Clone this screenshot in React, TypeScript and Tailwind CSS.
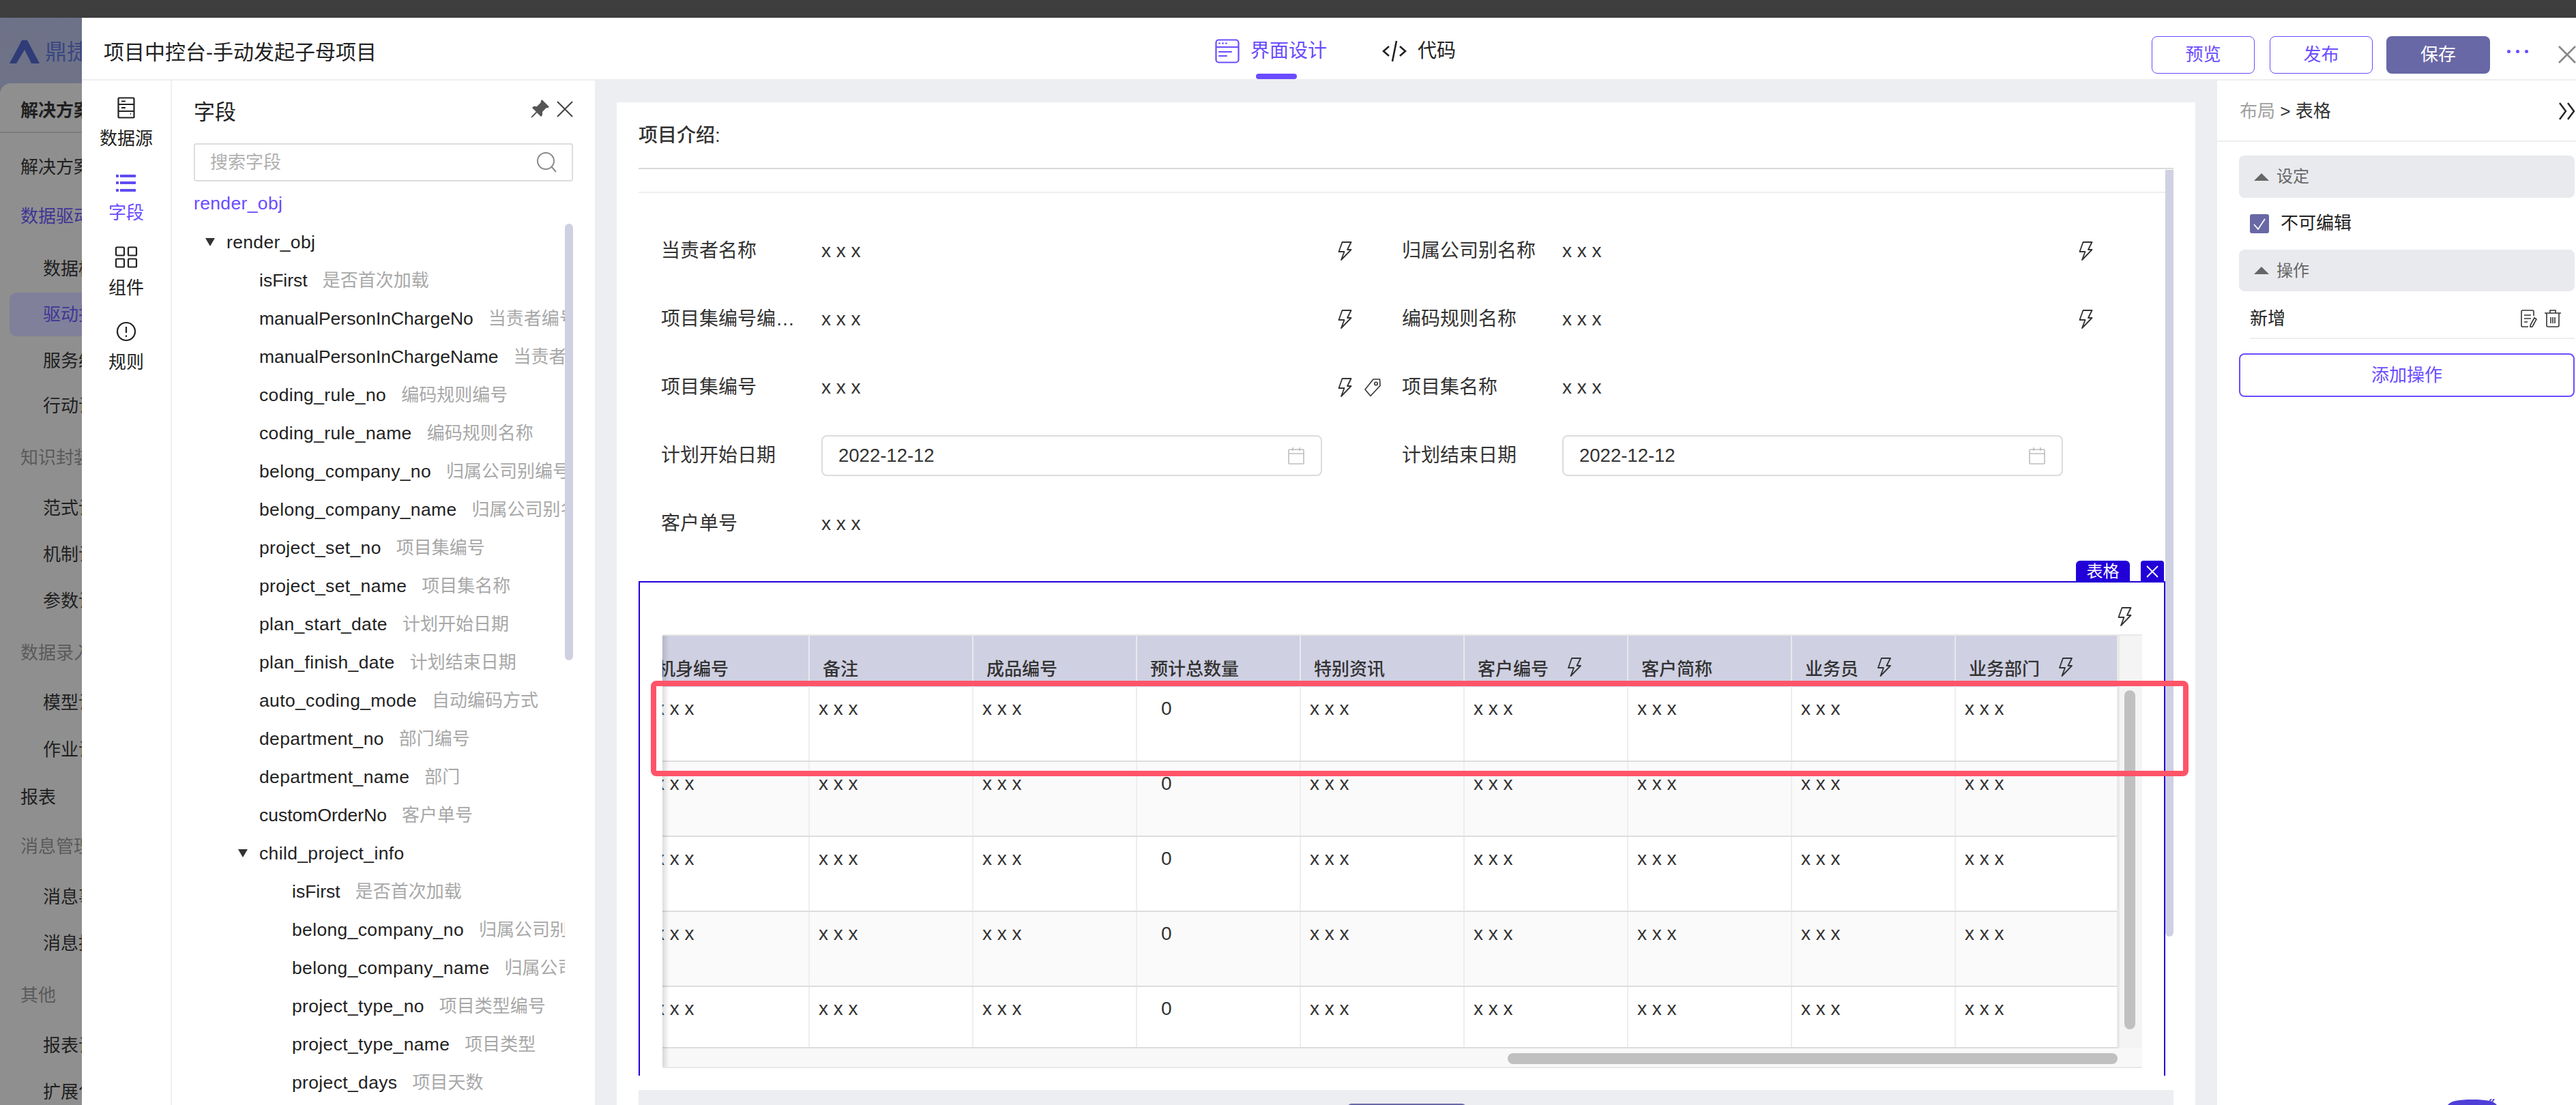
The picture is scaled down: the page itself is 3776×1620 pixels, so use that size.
import { BsPinAngleFill } from "react-icons/bs";

const Bolt = ({ className = "w-[21px] h-[28px]" }: { className?: string }) => (
  <svg viewBox="0 0 20 28" fill="none" stroke="#333" strokeWidth="1.8" strokeLinejoin="round" className={className}>
    <path d="M6 1h13l-5.500 11H19L4.500 27 9 15H1z" />
  </svg>
);

const TagIcon = () => (
  <svg viewBox="0 0 26 28" fill="none" stroke="#333" strokeWidth="1.6" strokeLinejoin="round" className="w-[26px] h-[28px]">
    <path d="M14 2h9.500l.5 9.500L10 26.500 2 17z" />
    <circle cx="18" cy="8.500" r="2.200" />
  </svg>
);

const CalendarIcon = () => (
  <svg viewBox="0 0 26 26" fill="none" stroke="#bdbdbd" strokeWidth="1.6" className="w-[26px] h-[26px]">
    <rect x="2" y="4" width="22" height="21" rx="1" />
    <path d="M2 10h22M8 1v5M18 1v5" />
  </svg>
);

const XXX = () => <span className="text-[28px]">x x x</span>;

const sideItems = [
  { t: "解决方案列表", c: "mt-[16px] pl-[30px] text-[#1f1f1f]" },
  { t: "数据驱动设计", c: "mt-[4px] pl-[30px] text-[#3f3696]" },
  { t: "数据模型", c: "mt-[9px] pl-[63px] text-[#1f1f1f]" },
  { t: "驱动执行", c: "mt-[1px] ml-[14px] pl-[49px] text-[#3f3696] bg-[#80809a] rounded-l-[10px] !h-[64px]" },
  { t: "服务编排", c: "mt-[3px] pl-[63px] text-[#1f1f1f] !h-[65px]" },
  { t: "行动设计", c: "pl-[63px] text-[#1f1f1f]" },
  { t: "知识封装", c: "mt-[8px] pl-[30px] text-[#5a5a5a]" },
  { t: "范式设计", c: "mt-[6px] pl-[63px] text-[#1f1f1f]" },
  { t: "机制设计", c: "pl-[63px] text-[#1f1f1f]" },
  { t: "参数设计", c: "pl-[63px] text-[#1f1f1f]" },
  { t: "数据录入", c: "mt-[8px] pl-[30px] text-[#5a5a5a]" },
  { t: "模型设计", c: "mt-[5px] pl-[63px] text-[#1f1f1f]" },
  { t: "作业设计", c: "mt-[1px] pl-[63px] text-[#1f1f1f]" },
  { t: "报表", c: "mt-[2px] pl-[30px] text-[#1f1f1f]" },
  { t: "消息管理", c: "mt-[4px] pl-[30px] text-[#5a5a5a]" },
  { t: "消息事件", c: "mt-[6px] pl-[63px] text-[#1f1f1f]" },
  { t: "消息推送", c: "pl-[63px] text-[#1f1f1f]" },
  { t: "其他", c: "mt-[8px] pl-[30px] text-[#5a5a5a]" },
  { t: "报表设计", c: "mt-[6px] pl-[63px] text-[#1f1f1f]" },
  { t: "扩展包", c: "pl-[63px] text-[#1f1f1f]" },
];

const fields = [
  ["isFirst", "是否首次加载"],
  ["manualPersonInChargeNo", "当责者编号"],
  ["manualPersonInChargeName", "当责者名称"],
  ["coding_rule_no", "编码规则编号"],
  ["coding_rule_name", "编码规则名称"],
  ["belong_company_no", "归属公司别编号"],
  ["belong_company_name", "归属公司别名称"],
  ["project_set_no", "项目集编号"],
  ["project_set_name", "项目集名称"],
  ["plan_start_date", "计划开始日期"],
  ["plan_finish_date", "计划结束日期"],
  ["auto_coding_mode", "自动编码方式"],
  ["department_no", "部门编号"],
  ["department_name", "部门"],
  ["customOrderNo", "客户单号"],
];

const childFields = [
  ["isFirst", "是否首次加载"],
  ["belong_company_no", "归属公司别编号"],
  ["belong_company_name", "归属公司别名称"],
  ["project_type_no", "项目类型编号"],
  ["project_type_name", "项目类型"],
  ["project_days", "项目天数"],
];

const columns = [
  { name: "备注" },
  { name: "成品编号" },
  { name: "预计总数量", zero: true },
  { name: "特别资讯" },
  { name: "客户编号", bolt: true },
  { name: "客户简称" },
  { name: "业务员", bolt: true },
  { name: "业务部门", bolt: true },
];

const rows = [
  "h-[110px] bg-white",
  "h-[110px] bg-[#fafafa]",
  "h-[110px] bg-white",
  "h-[110px] bg-[#fafafa]",
  "h-[90px] bg-white",
];

const FieldRow = ({ name, desc, indent }: { name: string; desc: string; indent: string }) => (
  <div className={`h-[56px] flex items-center whitespace-nowrap overflow-hidden ${indent}`}>
    <span className={`text-[#222] text-[26.5px] ${name.includes("_") ? "tracking-[0.35px]" : ""}`}>{name}</span>
    <span className="ml-[22px] text-[#a8a8a8]">{desc}</span>
  </div>
);

const FormCell = ({ label, value, icons }: { label: string; value: React.ReactNode; icons?: React.ReactNode }) => (
  <div className="h-[100px] flex items-center text-[28px]">
    <div className="w-[235px] pr-[35px] truncate leading-[36px]">{label}</div>
    <div className="w-[734px] flex items-center">{value}</div>
    <div className="w-[117px] pl-[23px] flex items-center gap-[17px]">{icons}</div>
  </div>
);

const DateInput = () => (
  <div className="w-full h-[60px] border-2 border-[#dcdcdc] rounded-[8px] pl-[23px] pr-[23px] flex items-center justify-between">
    <span className="text-[27.5px]">2022-12-12</span>
    <CalendarIcon />
  </div>
);

const App = () => {
  return (
    <div className="relative w-[3776px] h-[1620px] overflow-hidden flex flex-col bg-white text-[26px] leading-none text-[#333] font-['Liberation_Sans','Noto_Sans_CJK_SC',sans-serif]">
      <div className="h-[26px] shrink-0 bg-[#3e3e3e]" />
      <div className="flex-1 min-h-0 flex">
        {/* blurred page behind the drawer */}
        <div className="w-[120px] shrink-0 overflow-hidden flex flex-col bg-linear-to-b from-[#6e7288] to-[#808290]">
          <div className="h-[96px] shrink-0 flex items-center pl-[14px] pt-[4px] gap-[8px]">
            <svg viewBox="0 0 44 34" className="w-[44px] h-[34px] shrink-0">
              <path d="M0 34 18 0h8l18 34H32L22 14 10 34z" fill="#2f3c78" />
            </svg>
            <span className="text-[32px] text-[#3a4780] whitespace-nowrap">鼎捷</span>
          </div>
          <div className="flex-1 rounded-tl-[16px] bg-[#8f8f8f] overflow-hidden whitespace-nowrap">
            <div className="h-[73px] border-b-2 border-[#7c7c7c] pl-[30px] pt-[8px] flex items-center font-semibold text-[#1f1f1f]">解决方案</div>
            {sideItems.map((item, k) => (
              <div key={k} className={`h-[68px] flex items-center ${item.c}`}>
                {item.t}
              </div>
            ))}
          </div>
        </div>

        {/* drawer */}
        <div className="flex-1 min-w-0 flex flex-col bg-white border-t border-[#f4f4f4]">
          <div className="h-[91px] shrink-0 grid grid-cols-[1661px_auto_1fr] items-center border-b-2 border-[#eeeeee]">
            <div className="pl-[32px] pt-[10px] text-[30px] text-[#222]">项目中控台-手动发起子母项目</div>
            <div className="h-full flex items-center text-[28px] text-[#6a4cff] relative pt-[6px]">
              <svg viewBox="0 0 36 36" fill="none" stroke="#6a4cff" strokeWidth="2.2" strokeLinecap="round" className="w-[36px] h-[36px]">
                <rect x="1.500" y="1.500" width="33" height="33" rx="4" />
                <path d="M2 12h32M6 6.500h1M11 6.500h1M16 6.500h1M6 19h18M6 25h11" />
              </svg>
              <span className="ml-[16px]">界面设计</span>
              <div className="absolute bottom-0 left-[60px] w-[60px] h-[8px] rounded-full bg-[#6a4cff]" />
              <svg viewBox="0 0 36 32" fill="none" stroke="#222" strokeWidth="2.600" className="ml-[81px] w-[36px] h-[32px]">
                <path d="M10 9 2 16l8 7M26 9l8 7-8 7M21 1l-6 30" />
              </svg>
              <span className="ml-[16px] text-[#222]">代码</span>
            </div>
            <div className="flex items-center justify-end pt-[17px]">
              <div className="w-[151px] h-[55px] border-[1.5px] border-[#6a4cff] rounded-[8px] flex items-center justify-center text-[#6a4cff]">预览</div>
              <div className="ml-[22px] w-[151px] h-[55px] border-[1.5px] border-[#6a4cff] rounded-[8px] flex items-center justify-center text-[#6a4cff]">发布</div>
              <div className="ml-[20px] w-[152px] h-[55px] rounded-[8px] bg-[#6968a6] flex items-center justify-center text-white">保存</div>
              <div className="ml-[25px] w-[31px] -mt-[9px] flex justify-between">
                <span className="w-[5px] h-[5px] rounded-full bg-[#6a4cff]" />
                <span className="w-[5px] h-[5px] rounded-full bg-[#6a4cff]" />
                <span className="w-[5px] h-[5px] rounded-full bg-[#6a4cff]" />
              </div>
              <svg viewBox="0 0 26 26" stroke="#888" strokeWidth="2.6" className="ml-[44px] w-[26px] h-[26px]">
                <path d="M1 1l24 24M25 1 1 25" />
              </svg>
            </div>
          </div>

          <div className="flex-1 min-h-0 flex">
            {/* icon rail */}
            <div className="w-[132px] shrink-0 border-r-2 border-[#f0f0f0] flex flex-col items-center pt-[24px]">
              <div className="h-[110px] flex flex-col items-center">
                <svg viewBox="0 0 26 32" fill="none" stroke="#222" strokeWidth="2.2" className="w-[26px] h-[32px]">
                  <rect x="1.500" y="1.500" width="23" height="29" rx="1.500" />
                  <path d="M1.500 11h23M1.500 21h23M6 6.500h6M6 16h6M19 25h1" />
                </svg>
                <span className="mt-[16px] text-[#222]">数据源</span>
              </div>
              <div className="h-[109px] flex flex-col items-center text-[#6a4cff]">
                <svg viewBox="0 0 30 26" fill="#5f4cf0" className="w-[30px] h-[26px] mt-[4px]">
                  <rect x="0" y="0" width="4" height="4" />
                  <rect x="6" y="0" width="23" height="4" />
                  <rect x="0" y="10" width="4" height="4" />
                  <rect x="6" y="10" width="23" height="4" />
                  <rect x="0" y="21" width="4" height="4" />
                  <rect x="6" y="21" width="23" height="4" />
                </svg>
                <span className="mt-[17px]">字段</span>
              </div>
              <div className="h-[110px] flex flex-col items-center">
                <svg viewBox="0 0 34 32" fill="none" stroke="#222" strokeWidth="2.2" className="w-[34px] h-[32px]">
                  <rect x="2" y="1.500" width="12" height="12" rx="1.500" />
                  <rect x="20" y="1.500" width="12" height="12" rx="1.500" />
                  <rect x="2" y="18.500" width="12" height="12" rx="1.500" />
                  <rect x="20" y="18.500" width="12" height="12" rx="1.500" />
                </svg>
                <span className="mt-[16px] text-[#222]">组件</span>
              </div>
              <div className="flex flex-col items-center">
                <svg viewBox="0 0 30 30" fill="none" stroke="#222" strokeWidth="2.2" className="w-[30px] h-[30px]">
                  <circle cx="15" cy="15" r="13" />
                  <path d="M15 8v9M15 20.500v2.500" />
                </svg>
                <span className="mt-[17px] text-[#222]">规则</span>
              </div>
            </div>

            {/* field tree */}
            <div className="w-[620px] shrink-0 relative pl-[32px] pr-[32px] overflow-hidden">
              <div className="h-[92px] flex items-center justify-between">
                <span className="text-[31px] text-[#222]">字段</span>
                <div className="flex items-center gap-[10px] -mt-[8px]">
                  <BsPinAngleFill className="w-[30px] h-[30px] text-[#555]" />
                  <svg viewBox="0 0 24 24" stroke="#444" strokeWidth="2" className="w-[24px] h-[24px]">
                    <path d="M1 1l22 22M23 1 1 23" />
                  </svg>
                </div>
              </div>
              <div className="h-[56px] border-2 border-[#dddddd] rounded-[4px] pl-[22px] pr-[22px] flex items-center justify-between text-[#b0b0b0]">
                <span>搜索字段</span>
                <svg viewBox="0 0 30 32" fill="none" stroke="#8a8a8a" strokeWidth="2" className="w-[30px] h-[32px]">
                  <circle cx="14" cy="14" r="12" />
                  <path d="m23 23 6 7" />
                </svg>
              </div>
              <div className="h-[64px] flex items-center text-[26.5px] tracking-[0.35px] text-[#6a4cff]">render_obj</div>
              <div className="w-[544px] -mt-[3px]">
                <div className="h-[56px] flex items-center">
                  <span className="ml-[17px] w-0 h-0 border-x-[7px] border-x-transparent border-t-[12px] border-t-[#333]" />
                  <span className="ml-[17px] text-[#222] text-[26.5px] tracking-[0.35px]">render_obj</span>
                </div>
                {fields.map(([name, desc], k) => (
                  <FieldRow key={k} name={name} desc={desc} indent="pl-[96px]" />
                ))}
                <div className="h-[56px] flex items-center">
                  <span className="ml-[65px] w-0 h-0 border-x-[7px] border-x-transparent border-t-[12px] border-t-[#333]" />
                  <span className="ml-[17px] text-[#222] text-[26.5px] tracking-[0.35px]">child_project_info</span>
                </div>
                {childFields.map(([name, desc], k) => (
                  <FieldRow key={k} name={name} desc={desc} indent="pl-[144px]" />
                ))}
              </div>
              <div className="absolute left-[576px] top-[210px] w-[12px] h-[640px] rounded-full bg-[#cfd0e2]" />
            </div>

            {/* canvas */}
            <div className="flex-1 min-w-0 bg-[#edeef2] pt-[32px] px-[32px]">
              <div className="relative h-full bg-white px-[32px] flex flex-col">
                <div className="h-[98px] shrink-0 pt-[2px] border-b-2 border-[#d9d9d9] flex items-center text-[28px] font-medium text-[#333]">项目介绍:</div>
                <div className="h-[35px] shrink-0 border-b-2 border-[#eeeeee]" />
                <div className="shrink-0 pl-[33px] pt-[35px]">
                  <div className="grid grid-cols-[1086px_1fr]">
                    <FormCell label="当责者名称" value={<XXX />} icons={<Bolt />} />
                    <FormCell label="归属公司别名称" value={<XXX />} icons={<Bolt />} />
                    <FormCell label="项目集编号编码规则编号" value={<XXX />} icons={<Bolt />} />
                    <FormCell label="编码规则名称" value={<XXX />} icons={<Bolt />} />
                    <FormCell label="项目集编号" value={<XXX />} icons={<><Bolt /><TagIcon /></>} />
                    <FormCell label="项目集名称" value={<XXX />} />
                    <FormCell label="计划开始日期" value={<DateInput />} />
                    <FormCell label="计划结束日期" value={<DateInput />} />
                    <FormCell label="客户单号" value={<XXX />} />
                  </div>
                </div>

                {/* selected table */}
                <div className="relative mt-[34px] h-[725px] shrink-0 border-x-2 border-t-2 border-[#2200d8] mr-[12px] pl-[33px] pr-[32px]">
                  <div className="absolute -top-[32px] right-[50px] w-[79px] h-[32px] rounded-t-[6px] bg-[#2200d8] text-white text-[24px] flex items-center justify-center">表格</div>
                  <div className="absolute -top-[32px] right-[0px] w-[34px] h-[32px] rounded-t-[4px] bg-[#2200d8] text-white flex items-center justify-center">
                    <svg viewBox="0 0 18 18" stroke="white" strokeWidth="1.8" className="w-[18px] h-[18px]">
                      <path d="M1 1l16 16M17 1 1 17" />
                    </svg>
                  </div>
                  <div className="h-[76px] flex items-start justify-end pt-[36px] pr-[15px]">
                    <Bolt className="w-[21px] h-[28px]" />
                  </div>
                  <div className="relative h-[636px] overflow-hidden border-t-2 border-[#e8e8e8] bg-[#f8f8f8]">
                    <div className="flex">
                      <div className="w-[2136px] overflow-hidden shrink-0 border-r-4 border-[#e8e8e8]">
                        <div className="flex h-[75px] bg-[#cfd0e2] -ml-[24px] font-medium text-[#333] whitespace-nowrap">
                          <div className="w-[240px] shrink-0 pl-[17px] pt-[36px] border-r-2 border-[#e8e8ee]">机身编号</div>
                          {columns.map((col, k) => (
                            <div key={k} className="w-[240px] shrink-0 pl-[19px] pt-[36px] border-r-2 border-[#e8e8ee] flex items-start">
                              <span>{col.name}</span>
                              {col.bolt && <Bolt className="ml-[28px] -mt-[4px] w-[20px] h-[28px]" />}
                            </div>
                          ))}
                        </div>
                        {rows.map((row, r) => (
                          <div key={r} className={`flex -ml-[24px] border-b-2 border-[#dddddd] ${row}`}>
                            <div className="w-[240px] shrink-0 pl-[13px] pt-[18px] border-r-2 border-[#eeeeee]"><XXX /></div>
                            {columns.map((col, k) => (
                              <div key={k} className={`w-[240px] shrink-0 pt-[18px] border-r-2 border-[#eeeeee] ${col.zero ? "pl-[35px]" : "pl-[13px]"}`}>
                                {col.zero ? <span className="text-[28px]">0</span> : <XXX />}
                              </div>
                            ))}
                          </div>
                        ))}
                      </div>
                      <div className="flex-1 bg-[#f4f4f4] relative">
                        <div className="absolute left-[7px] top-[80px] w-[16px] h-[497px] rounded-full bg-[#c0c0c0]" />
                      </div>
                    </div>
                    {/* left fixed column shadow */}
                    <div className="absolute left-0 top-0 bottom-0 w-[10px] bg-linear-to-r from-[#00000022] to-transparent" />
                    <div className="absolute left-[1239px] right-[36px] top-[612px] h-[16px] rounded-full bg-[#c0c0c0]" />
                    <div className="absolute left-0 right-0 bottom-0 h-[2px] bg-[#e8e8e8]" />
                  </div>
                </div>

                <div className="mt-[21px] flex-1 bg-[#edeef2] relative">
                  <div className="absolute left-[1039px] top-[20px] w-[174px] h-[10px] rounded-t-[6px] bg-[#6968a6]" />
                </div>

                {/* canvas scrollbar */}
                <div className="absolute right-[32px] top-[99px] w-[12px] h-[1124px] rounded-b-full bg-[#cfd0e2]" />
              </div>
            </div>

            {/* property panel */}
            <div className="w-[526px] shrink-0 flex flex-col bg-white">
              <div className="h-[90px] shrink-0 border-b-2 border-[#eeeeee] pl-[33px] pt-[2px] flex items-center justify-between">
                <span>
                  <span className="text-[#a0a0a0]">布局</span>
                  <span className="text-[#333]"> &gt; 表格</span>
                </span>
                <svg viewBox="0 0 26 28" fill="none" stroke="#222" strokeWidth="2.4" className="w-[26px] h-[28px]">
                  <path d="M2 2l9 12-9 12M14 2l9 12-9 12" />
                </svg>
              </div>
              <div className="pl-[32px] pr-[2px] pt-[20px]">
                <div className="h-[62px] rounded-[8px] bg-[#e9eaee] flex items-center pl-[22px] text-[24px] text-[#666]">
                  <span className="w-0 h-0 border-x-[11px] border-x-transparent border-b-[11px] border-b-[#666]" />
                  <span className="ml-[11px]">设定</span>
                </div>
                <div className="h-[76px] flex items-center pl-[16px]">
                  <span className="w-[28px] h-[28px] rounded-[3px] bg-[#6968a6] flex items-center justify-center">
                    <svg viewBox="0 0 20 20" fill="none" stroke="white" strokeWidth="1.8" className="w-[20px] h-[20px]">
                      <path d="m2 11 6 7L18 3" />
                    </svg>
                  </span>
                  <span className="ml-[17px] -mt-[2px] text-[#222]">不可编辑</span>
                </div>
                <div className="h-[61px] rounded-[8px] bg-[#e9eaee] flex items-center pl-[22px] text-[24px] text-[#666]">
                  <span className="w-0 h-0 border-x-[11px] border-x-transparent border-b-[11px] border-b-[#666]" />
                  <span className="ml-[11px]">操作</span>
                </div>
                <div className="ml-[16px] h-[70px] pt-[11px] border-b-2 border-[#eeeeee] flex items-center justify-between pr-[19px]">
                  <span className="text-[#222]">新增</span>
                  <span className="flex items-center gap-[10px]">
                    <svg viewBox="0 0 24 26" fill="none" stroke="#333" strokeWidth="1.6" className="w-[24px] h-[26px]">
                      <path d="M19 9V2.500a1.500 1.500 0 0 0-1.500-1.500h-15A1.500 1.500 0 0 0 1 2.500v21A1.500 1.500 0 0 0 2.500 25H11M5 8h10M5 13h10M5 18h5M20 12l3 2-6 11-3 .5.200-3z" />
                    </svg>
                    <svg viewBox="0 0 26 26" fill="none" stroke="#333" strokeWidth="1.6" className="w-[26px] h-[26px]">
                      <path d="M1 5h24M9 5V1h8v4M4 5v18a2 2 0 0 0 2 2h14a2 2 0 0 0 2-2V5M10 11v9M13 11v9M16 11v9" />
                    </svg>
                  </span>
                </div>
                <div className="mt-[21px] h-[64px] border-2 border-[#6a4cff] rounded-[8px] flex items-center justify-center text-[#6a4cff]">添加操作</div>
              </div>
            </div>
          </div>
        </div>
      </div>

      {/* red callout from the annotated screenshot */}
      <div className="absolute left-[954px] top-[998px] w-[2254px] h-[140px] border-[8px] border-[#ff5468] rounded-[8px] z-10" />

      {/* floating helper */}
      <svg viewBox="0 0 76 9" className="absolute left-[3586px] top-[1611px] w-[76px] h-[9px]">
        <path d="M2 9C6 3 18 1 38 1s32 2 36 8z" fill="#4f3fd8" />
        <path d="M62 5 66 0M66 6l4-6" stroke="#4f3fd8" strokeWidth="2" />
      </svg>
    </div>
  );
};

export default App;
